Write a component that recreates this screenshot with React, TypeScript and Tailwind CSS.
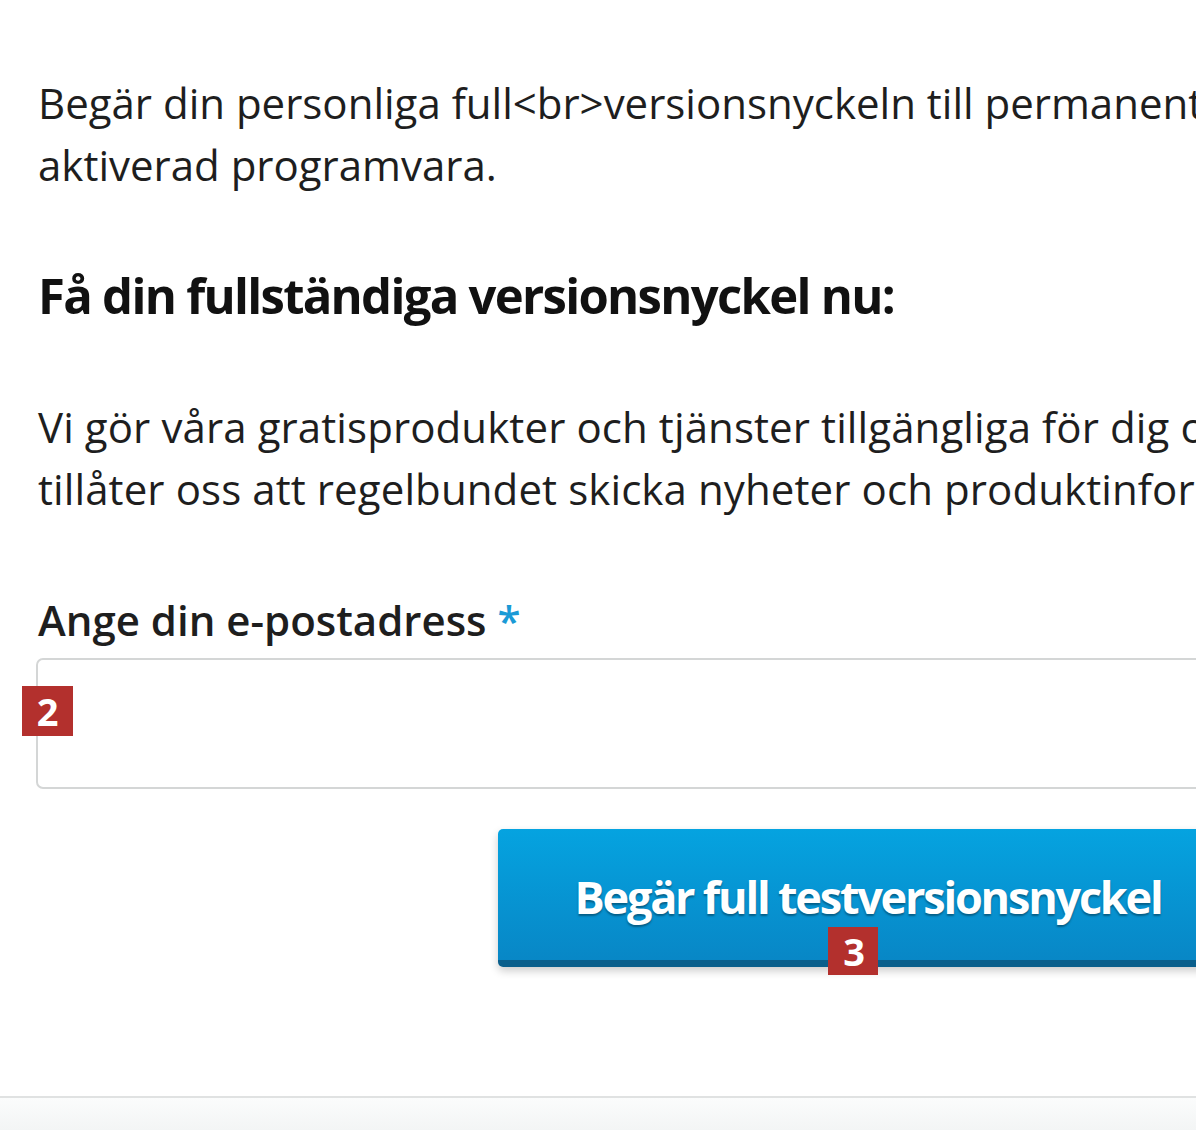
import React from 'react';

const Badge: React.FC<{ n: string; className?: string }> = ({ n, className }) => (
  <span
    className={`absolute flex items-center justify-center bg-[#b3302d] text-white font-bold text-[38px] leading-none [text-shadow:none] ${className ?? ''}`}
  >
    {n}
  </span>
);

export default function App() {
  return (
    <div className="w-[1196px] h-[1130px] overflow-hidden bg-white flex flex-col" style={{ fontFamily: '"Open Sans", "Liberation Sans", sans-serif' }}>
      <div className="flex-1 pl-[38px] pt-[72px]">
        <div className="w-[1200px] flex flex-col">
          <p className="text-[42px] leading-[62px] text-[#1e1e1e] whitespace-nowrap">
            Begär din personliga full&lt;br&gt;versionsnyckeln till permanent
            <br />
            aktiverad programvara.
          </p>

          <h2 className="mt-[68px] text-[49px] leading-[62px] font-bold tracking-[-1.7px] text-[#111] whitespace-nowrap">
            Få din fullständiga versionsnyckel nu:
          </h2>

          <p className="mt-[70px] text-[42px] leading-[62px] tracking-[0.1px] text-[#1e1e1e] whitespace-nowrap">
            Vi gör våra gratisprodukter och tjänster tillgängliga för dig om du
            <br />
            tillåter oss att regelbundet skicka nyheter och produktinformation.
          </p>

          <label className="mt-[72px] text-[42px] leading-[56px] font-semibold text-[#1e1e1e] whitespace-nowrap">
            Ange din e-postadress <span className="text-[#1a9ad6]">*</span>
          </label>

          <div className="relative mt-[10px] -ml-[2px] h-[131px] rounded-[7px] border-2 border-[#d4d6d6] bg-white">
            <Badge n="2" className="left-[-16px] top-[26px] w-[51px] h-[50px]" />
          </div>

          <div className="flex justify-end mt-[40px]">
            <button className="relative w-[740px] h-[138px] rounded-[5px] bg-gradient-to-b from-[#05a3e0] to-[#0887c6] border-b-[7px] border-[#0a5f8c] shadow-[0_4px_8px_rgba(0,0,0,0.2)] text-white text-[45px] font-bold tracking-[-2.2px] [text-shadow:0_2px_2px_rgba(0,0,0,0.35)]">
              <span className="relative top-[2px]">Begär full testversionsnyckel</span>
              <Badge n="3" className="left-[330px] top-[98px] w-[50px] h-[48px]" />
            </button>
          </div>
        </div>
      </div>
      <div className="h-[34px] border-t-2 border-[#e0e2e2] bg-gradient-to-b from-[#fbfcfc] to-[#f3f5f5]" />
    </div>
  );
}
